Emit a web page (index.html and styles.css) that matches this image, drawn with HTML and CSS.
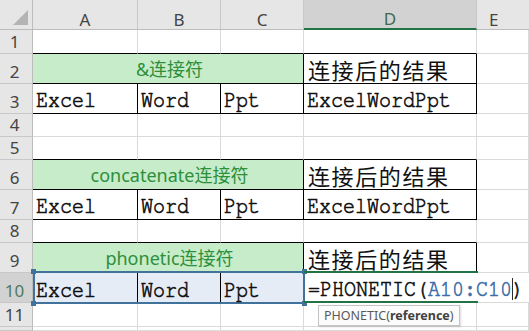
FILE: index.html
```html
<!DOCTYPE html>
<html>
<head>
<meta charset="utf-8">
<link rel="stylesheet" href="styles.css">
</head>
<body>
<div class="sheet">
  <div class="corner"><span class="tri"></span></div>
  <div class="ch">A</div><div class="ch">B</div><div class="ch">C</div><div class="ch sel">D</div><div class="ch last">E</div>

  <div class="rh">1</div><div class="c bb"></div><div class="c bb"></div><div class="c bb"></div><div class="c bb"></div><div class="c"></div>

  <div class="rh">2</div><div class="c green merge br bb">&amp;连接符</div><div class="c res br bb">连接后的结果</div><div class="c"></div>

  <div class="rh">3</div><div class="c br bb"><span class="mono">Excel</span></div><div class="c br bb"><span class="mono">Word</span></div><div class="c br bb"><span class="mono">Ppt</span></div><div class="c br bb"><span class="mono">ExcelWordPpt</span></div><div class="c"></div>

  <div class="rh">4</div><div class="c"></div><div class="c"></div><div class="c"></div><div class="c"></div><div class="c"></div>

  <div class="rh">5</div><div class="c bb"></div><div class="c bb"></div><div class="c bb"></div><div class="c bb"></div><div class="c"></div>

  <div class="rh">6</div><div class="c green merge br bb">concatenate连接符</div><div class="c res br bb">连接后的结果</div><div class="c"></div>

  <div class="rh">7</div><div class="c br bb"><span class="mono">Excel</span></div><div class="c br bb"><span class="mono">Word</span></div><div class="c br bb"><span class="mono">Ppt</span></div><div class="c br bb"><span class="mono">ExcelWordPpt</span></div><div class="c"></div>

  <div class="rh">8</div><div class="c bb"></div><div class="c bb"></div><div class="c bb"></div><div class="c bb"></div><div class="c"></div>

  <div class="rh">9</div><div class="c green merge br bb">phonetic连接符</div><div class="c res br bb">连接后的结果</div><div class="c"></div>

  <div class="rh selr">10</div>
  <div class="rng">
    <div class="c br"><span class="mono">Excel</span></div><div class="c br"><span class="mono">Word</span></div><div class="c br"><span class="mono">Ppt</span></div>
    <span class="hd h1"></span><span class="hd h2"></span><span class="hd h3"></span><span class="hd h4"></span>
  </div>
  <div class="c edit"><span class="mono">=PHONETIC(<span class="ref">A10:C10</span><span class="caret"></span>)</span></div>

  <div class="rh">11</div><div class="c"></div><div class="c"></div><div class="c"></div><div class="c tipcell"><div class="tip">PHONETIC(<b>reference</b>)</div></div><div class="c"></div>

  <div class="rh"></div><div class="c"></div><div class="c"></div><div class="c"></div><div class="c"></div><div class="c"></div>
</div>
</body>
</html>
```
FILE: styles.css
```css
html, body {
  margin: 0;
  padding: 0;
  background: #ffffff;
}
.sheet {
  width: 529px;
  height: 331px;
  overflow: hidden;
  position: relative;
  display: grid;
  grid-template-columns: 33px 105px 83px 83px 173px 1fr;
  grid-template-rows: 30px 24px 30px 30px 23px 23px 30px 30px 23px 30px 30px 24px 1fr;
  font-family: "Noto Sans", "Noto Sans CJK SC", sans-serif;
}
.corner {
  background: #e6e6e6;
  border-right: 1px solid #bcbcbc;
  border-bottom: 1px solid #bcbcbc;
  box-sizing: border-box;
  position: relative;
}
.tri {
  position: absolute;
  right: 4px;
  bottom: 4px;
  width: 0;
  height: 0;
  border-left: 15px solid transparent;
  border-bottom: 15px solid #b4b4b4;
}
.ch {
  box-sizing: border-box;
  background: #e6e6e6;
  border-right: 1px solid #c8c8c8;
  border-bottom: 1px solid #bcbcbc;
  color: #444;
  font-size: 17px;
  display: flex;
  align-items: flex-end;
  justify-content: center;
  line-height: 18px;
}
.ch.sel {
  background: #d2d2d2;
  border-bottom: 2px solid #217346;
  color: #3d6a4c;
}
.ch.last {
  border-right: none;
  justify-content: flex-start;
  padding-left: 12px;
}
.rh {
  box-sizing: border-box;
  background: #e6e6e6;
  border-right: 1px solid #bcbcbc;
  border-bottom: 1px solid #c8c8c8;
  color: #444;
  font-size: 17px;
  display: flex;
  align-items: flex-end;
  justify-content: center;
  padding-right: 3px;
  padding-bottom: 1px;
  line-height: 20px;
}
.rh.selr {
  background: #d2d2d2;
  color: #4f7a5f;
}
.c {
  box-sizing: border-box;
  border-right: 1px solid #dadada;
  border-bottom: 1px solid #dadada;
  display: flex;
  align-items: flex-end;
  padding-left: 3px;
  min-width: 0;
  white-space: nowrap;
}
.c.bb { border-bottom-color: #000; }
.c.br { border-right-color: #000; }
.merge {
  grid-column: span 3;
}
.green {
  background: #c6ecca;
  color: #2e8f3a;
  font-size: 18px;
  justify-content: center;
  padding-bottom: 3px;
  line-height: 22px;
}
.res {
  font-family: "Noto Sans CJK SC", sans-serif;
  font-size: 22px;
  letter-spacing: 1.6px;
  color: #111;
  line-height: 26px;
  padding-left: 4px;
  padding-bottom: 1px;
}
.mono {
  display: inline-block;
  font-family: "FreeMono", "Nimbus Mono PS", "Nimbus Mono L", "Courier 10 Pitch", "Liberation Mono", monospace;
  font-size: 24px;
  line-height: 26px;
  color: #111;
  transform: scaleX(0.833);
  transform-origin: left bottom;
  -webkit-text-stroke: 0.7px #111;
}
.rng {
  grid-column: 2 / span 3;
  display: grid;
  grid-template-columns: 105px 83px 83px;
  background: #e6ecf6;
  position: relative;
}
.rng::before {
  content: "";
  position: absolute;
  left: 0;
  top: -2px;
  right: -1px;
  bottom: -1px;
  border: 2px solid #41729c;
  pointer-events: none;
}
.rng .c { border-bottom: none; }
.hd {
  position: absolute;
  width: 5px;
  height: 5px;
  background: #41729c;
}
.h1 { left: -2px; top: -4px; }
.h2 { right: -3px; top: -4px; }
.h3 { left: -2px; bottom: -3px; }
.h4 { right: -3px; bottom: -3px; }
.edit {
  grid-column: span 2;
  position: relative;
  border-right: none;
  padding-left: 4px;
}
.edit::before {
  content: "";
  position: absolute;
  left: 0;
  top: -2px;
  width: 174px;
  bottom: -1px;
  border-top: 2px solid #217346;
  border-bottom: 2px solid #217346;
}
.ref {
  color: #3d6ea8;
  -webkit-text-stroke: 0.7px #3d6ea8;
}
.caret {
  display: inline-block;
  width: 1px;
  height: 22px;
  background: #000;
  vertical-align: -4px;
  margin-right: -1px;
}
.tipcell {
  position: relative;
}
.tip {
  position: absolute;
  left: 14px;
  top: 2px;
  height: 21px;
  box-sizing: border-box;
  padding: 0 5px;
  background: #fcfcfc;
  border: 1px solid #c4c4c4;
  box-shadow: 1px 1px 2px rgba(0,0,0,0.15);
  color: #595959;
  font-family: "Noto Sans", sans-serif;
  font-size: 12.5px;
  line-height: 19px;
  white-space: nowrap;
  z-index: 2;
}
.tip b {
  color: #404040;
}
```
